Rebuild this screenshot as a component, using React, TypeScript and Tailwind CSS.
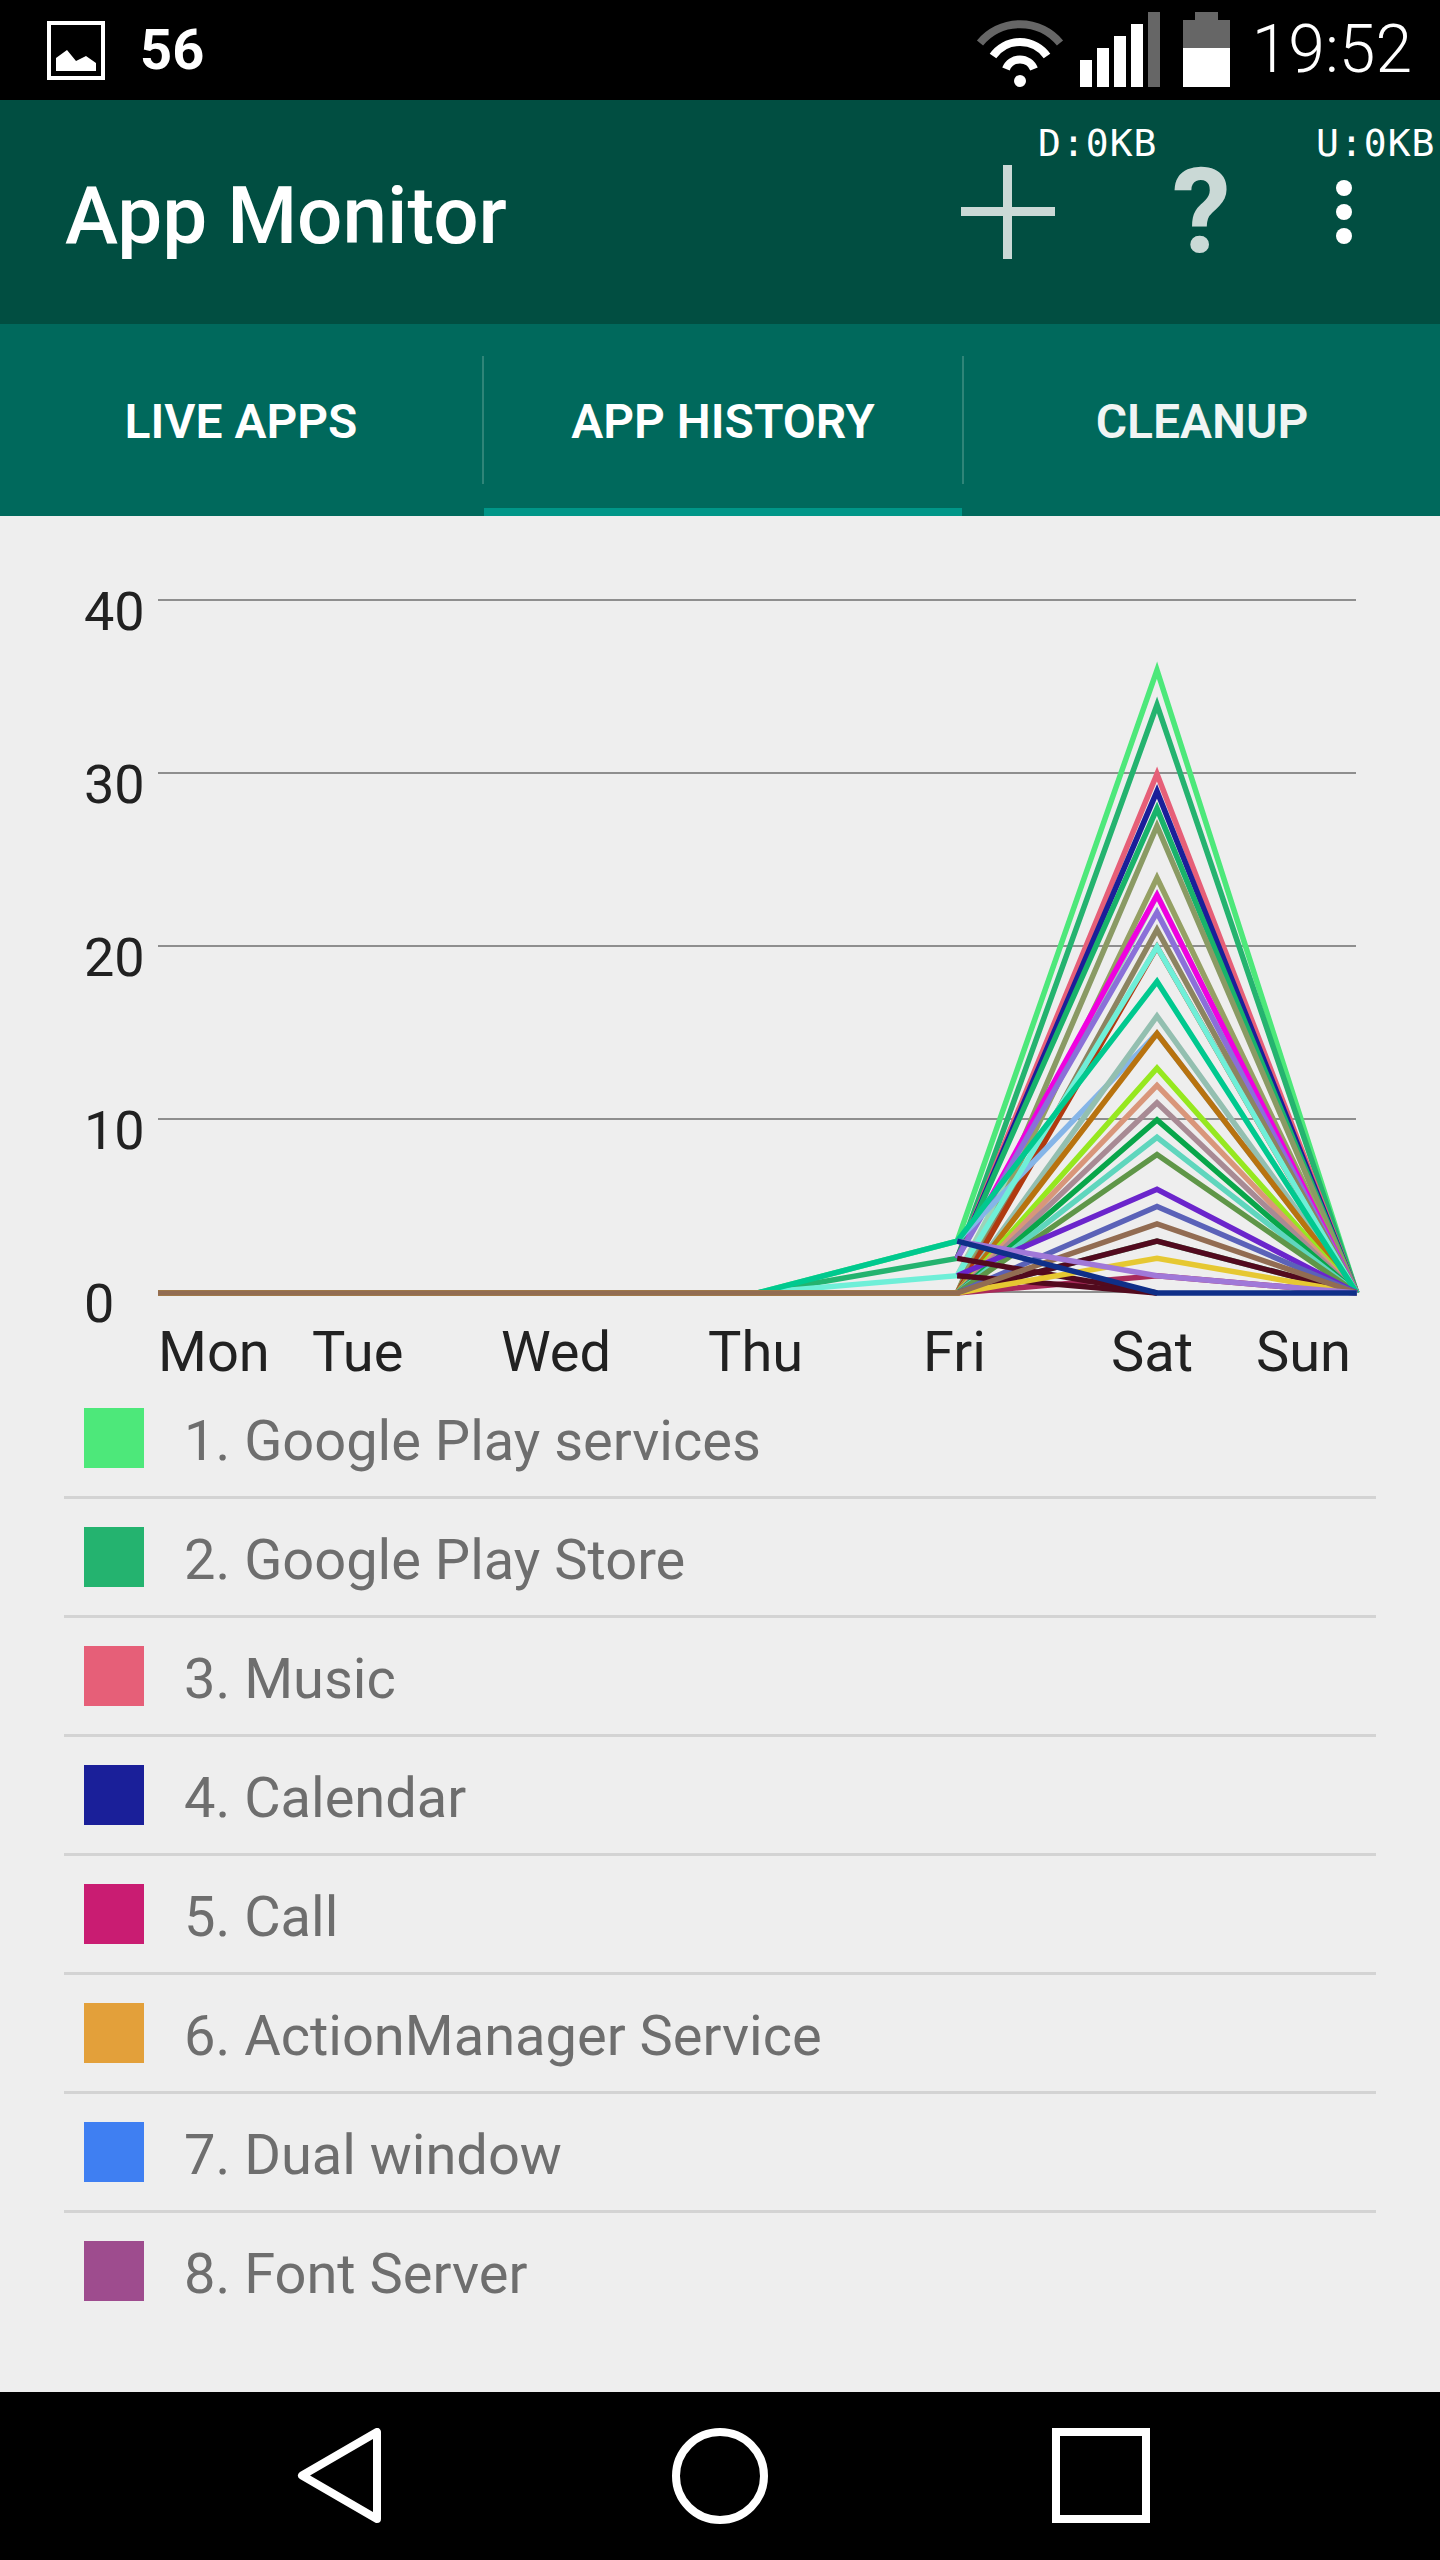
const font = { fontFamily: "Roboto, 'Liberation Sans', sans-serif" };
const mono = { fontFamily: "'DejaVu Sans Mono', monospace" };

const legend = [
  ["1. Google Play services", "#4de87a"],
  ["2. Google Play Store", "#24b36f"],
  ["3. Music", "#e65f78"],
  ["4. Calendar", "#1a1f99"],
  ["5. Call", "#c91c72"],
  ["6. ActionManager Service", "#e3a03a"],
  ["7. Dual window", "#3f7ff2"],
  ["8. Font Server", "#9e4c8e"],
];

// colour, values Mon..Sun; null = no data that day. Drawn in this order.
const z = [0, 0, 0, 0];
const n = [null, null, null, null];
const series: [string, (number | null)[]][] = [
  ["#4de87a", [...z, 3, 36, 0]],
  ["#24b36f", [...z, 2, 34, 0]],
  ["#e65f78", [...n, 2, 30, 0]],
  ["#1a1f99", [...n, 2, 29, 0]],
  ["#19b36b", [...n, 2, 28, 0]],
  ["#8a9a64", [...z, 0, 27, 0]],
  ["#9cd4b8", [...n, 1, 23, 0]],
  ["#95a064", [...z, 0, 24, 0]],
  ["#f000e0", [...n, 2, 23, 0]],
  ["#8a70d8", [...n, 2, 22, 0]],
  ["#8c8460", [...z, 0, 21, 0]],
  ["#b03a10", [...z, 0, 20, 0]],
  ["#85b5e8", [...n, 3, 15, 0]],
  ["#93bfb0", [...z, 0, 16, 0]],
  ["#b8730f", [...z, 0, 15, 0]],
  ["#96e81f", [...z, 0, 13, 0]],
  ["#d9967a", [...z, 0, 12, 0]],
  ["#a88a94", [...z, 0, 11, 0]],
  ["#08a64a", [...z, 0, 10, 0]],
  ["#5fd6bd", [...z, 0, 9, 0]],
  ["#5f9648", [...z, 0, 8, 0]],
  ["#6fefd8", [...z, 1, 20, 0]],
  ["#00c98f", [...z, 3, 18, 0]],
  ["#6b25cc", [...n, 1, 6, 0]],
  ["#5b62b8", [...z, 0, 5, 0]],
  ["#5aa878", [...z, 0, 3, 0]],
  ["#a82a5a", [...z, 0, 1, 0]],
  ["#520a1e", [...n, 2, 0, null]],
  ["#520a1e", [...n, 1, 0, null]],
  ["#520a1e", [...z, 0, 3, 0]],
  ["#e6c832", [...z, 0, 2, 0]],
  ["#926c52", [...z, 0, 4, 0]],
  ["#a078d8", [...n, 3, 1, 0]],
  ["#0f2f88", [...n, 3, 0, 0]],
];

const X0 = 158;
const STEP = 199.8;
const yOf = (v: number) => 1292 - v * 17.3;

function pts(vals: (number | null)[]) {
  return vals
    .map((v, i) => (v === null ? null : `${X0 + i * STEP},${yOf(v) + 1}`))
    .filter(Boolean)
    .join(" ");
}

function Chart() {
  const grid = [0, 10, 20, 30, 40];
  const days: [string, number][] = [
    ["Mon", 158],
    ["Tue", 312],
    ["Wed", 501],
    ["Thu", 708],
    ["Fri", 923],
    ["Sat", 1111],
    ["Sun", 1256],
  ];
  return (
    <svg width="1440" height="876" viewBox="0 516 1440 876" className="block shrink-0" style={font}>
      {grid.map((g) => (
        <g key={g}>
          <line x1="158" x2="1356" y1={yOf(g)} y2={yOf(g)} stroke="#6e6e6e" strokeWidth="1.5" />
          <text x="84" y={yOf(g) + 30} fontSize="54" fill="#212121">
            {g}
          </text>
        </g>
      ))}
      {series.map(([c, v], i) => (
        <polyline key={i} points={pts(v)} fill="none" stroke={c} strokeWidth="5.5" strokeLinejoin="miter" />
      ))}
      {days.map(([d, x]) => (
        <text key={d} x={x} y="1371" fontSize="56" fill="#212121">
          {d}
        </text>
      ))}
    </svg>
  );
}

function StatusIcons() {
  return (
    <svg width="254" height="100" viewBox="978 0 254 100" className="block">
      <path d="M982 43A52 52 0 0 1 1062 43" fill="none" stroke="#666" strokeWidth="8" />
      <path d="M995 56A33 33 0 0 1 1049 56" fill="none" stroke="#fff" strokeWidth="8" />
      <path d="M1008 69A15 15 0 0 1 1036 69" fill="none" stroke="#fff" strokeWidth="8" />
      <circle cx="1022" cy="81" r="6" fill="#fff" />
      <rect x="1082" y="60" width="12" height="27" fill="#fff" />
      <rect x="1099" y="48" width="12" height="39" fill="#fff" />
      <rect x="1116" y="36" width="12" height="51" fill="#fff" />
      <rect x="1133" y="24" width="12" height="63" fill="#fff" />
      <rect x="1150" y="12" width="12" height="75" fill="#666" />
      <path d="M1197 12H1220V20H1232V48H1185V20H1197Z" fill="#666" />
      <rect x="1185" y="48" width="47" height="39" fill="#fff" />
    </svg>
  );
}

export default function App() {
  return (
    <div className="flex h-[2560px] w-[1440px] flex-col overflow-hidden bg-[#eeeeee]" style={font}>
      {/* status bar */}
      <div className="flex h-[100px] shrink-0 items-center bg-black pl-[47px]">
        <svg width="58" height="59" viewBox="47 21 58 59" className="mb-[-1px] block">
          <rect x="49" y="23" width="54" height="55" fill="none" stroke="#fff" strokeWidth="4" />
          <path d="M56 58L67 50L76 61L86 56L96 63V71H56Z" fill="#fff" />
        </svg>
        <span className="ml-[35px] text-[56px] leading-none font-bold text-white">56</span>
        <div className="ml-auto">
          <StatusIcons />
        </div>
        <span className="mr-[28px] ml-[22px] text-[66px] leading-none font-light text-white">19:52</span>
      </div>

      {/* app bar */}
      <div className="relative flex h-[224px] shrink-0 items-center bg-[#014e41] pl-[65px]">
        <span className="mt-[7px] text-[80px] leading-none font-medium text-white">App Monitor</span>
        <div className="ml-auto flex items-center pr-[88px]">
          <svg width="94" height="94" viewBox="0 0 94 94" className="block">
            <rect x="0" y="42" width="94" height="9" fill="#cad9d6" />
            <rect x="42" y="0" width="9" height="94" fill="#cad9d6" />
          </svg>
          <span className="ml-[117px] w-[49px] text-center text-[118px] leading-none font-bold text-[#cad9d6]">?</span>
          <div className="ml-[115px] flex flex-col gap-[8px]">
            <span className="block h-[16px] w-[16px] rounded-full bg-white" />
            <span className="block h-[16px] w-[16px] rounded-full bg-white" />
            <span className="block h-[16px] w-[16px] rounded-full bg-white" />
          </div>
        </div>
        <span className="absolute top-[24px] left-[1038px] text-[38px] leading-none tracking-[1px] text-white" style={mono}>
          D:0KB
        </span>
        <span className="absolute top-[24px] left-[1316px] text-[38px] leading-none tracking-[1px] text-white" style={mono}>
          U:0KB
        </span>
      </div>

      {/* tabs */}
      <div className="flex h-[192px] shrink-0 items-stretch bg-[#00695c] text-[48px] font-semibold text-white">
        <div className="flex w-[482px] items-center justify-center pt-[3px]">LIVE APPS</div>
        <div className="mt-[32px] mb-[32px] w-[2px] bg-[#2f8578]" />
        <div className="flex w-[478px] items-center justify-center border-b-[8px] border-[#009688] pt-[11px]">APP HISTORY</div>
        <div className="mt-[32px] mb-[32px] w-[2px] bg-[#2f8578]" />
        <div className="flex flex-1 items-center justify-center pt-[3px] text-[#f0f5f4]">CLEANUP</div>
      </div>

      {/* chart */}
      <Chart />

      {/* legend */}
      <div className="mx-[64px] -mt-[12px] flex flex-col">
        {legend.map(([name, color], i) => (
          <div
            key={name}
            className={
              i < legend.length - 1
                ? "flex h-[119px] items-center border-b-[3px] border-[#d3d3d3] pl-[20px]"
                : "flex h-[116px] items-center pl-[20px]"
            }
          >
            <span className="block h-[60px] w-[60px] shrink-0" style={{ backgroundColor: color }} />
            <span className="mt-[6px] ml-[40px] text-[56px] leading-none text-[#6e6e6e]">{name}</span>
          </div>
        ))}
      </div>

      {/* nav bar */}
      <div className="mt-auto flex h-[168px] shrink-0 items-start bg-black pt-[36px]">
        <svg width="84" height="95" viewBox="0 0 84 95" className="ml-[297px] block">
          <path d="M80 4V91L5 47.5Z" fill="none" stroke="#fff" strokeWidth="8" strokeLinejoin="round" />
        </svg>
        <svg width="96" height="96" viewBox="0 0 96 96" className="ml-[291px] block">
          <circle cx="48" cy="48" r="44" fill="none" stroke="#fff" strokeWidth="8" />
        </svg>
        <svg width="98" height="95" viewBox="0 0 98 95" className="ml-[284px] block">
          <rect x="4" y="4" width="90" height="87" fill="none" stroke="#fff" strokeWidth="8" />
        </svg>
      </div>
    </div>
  );
}
